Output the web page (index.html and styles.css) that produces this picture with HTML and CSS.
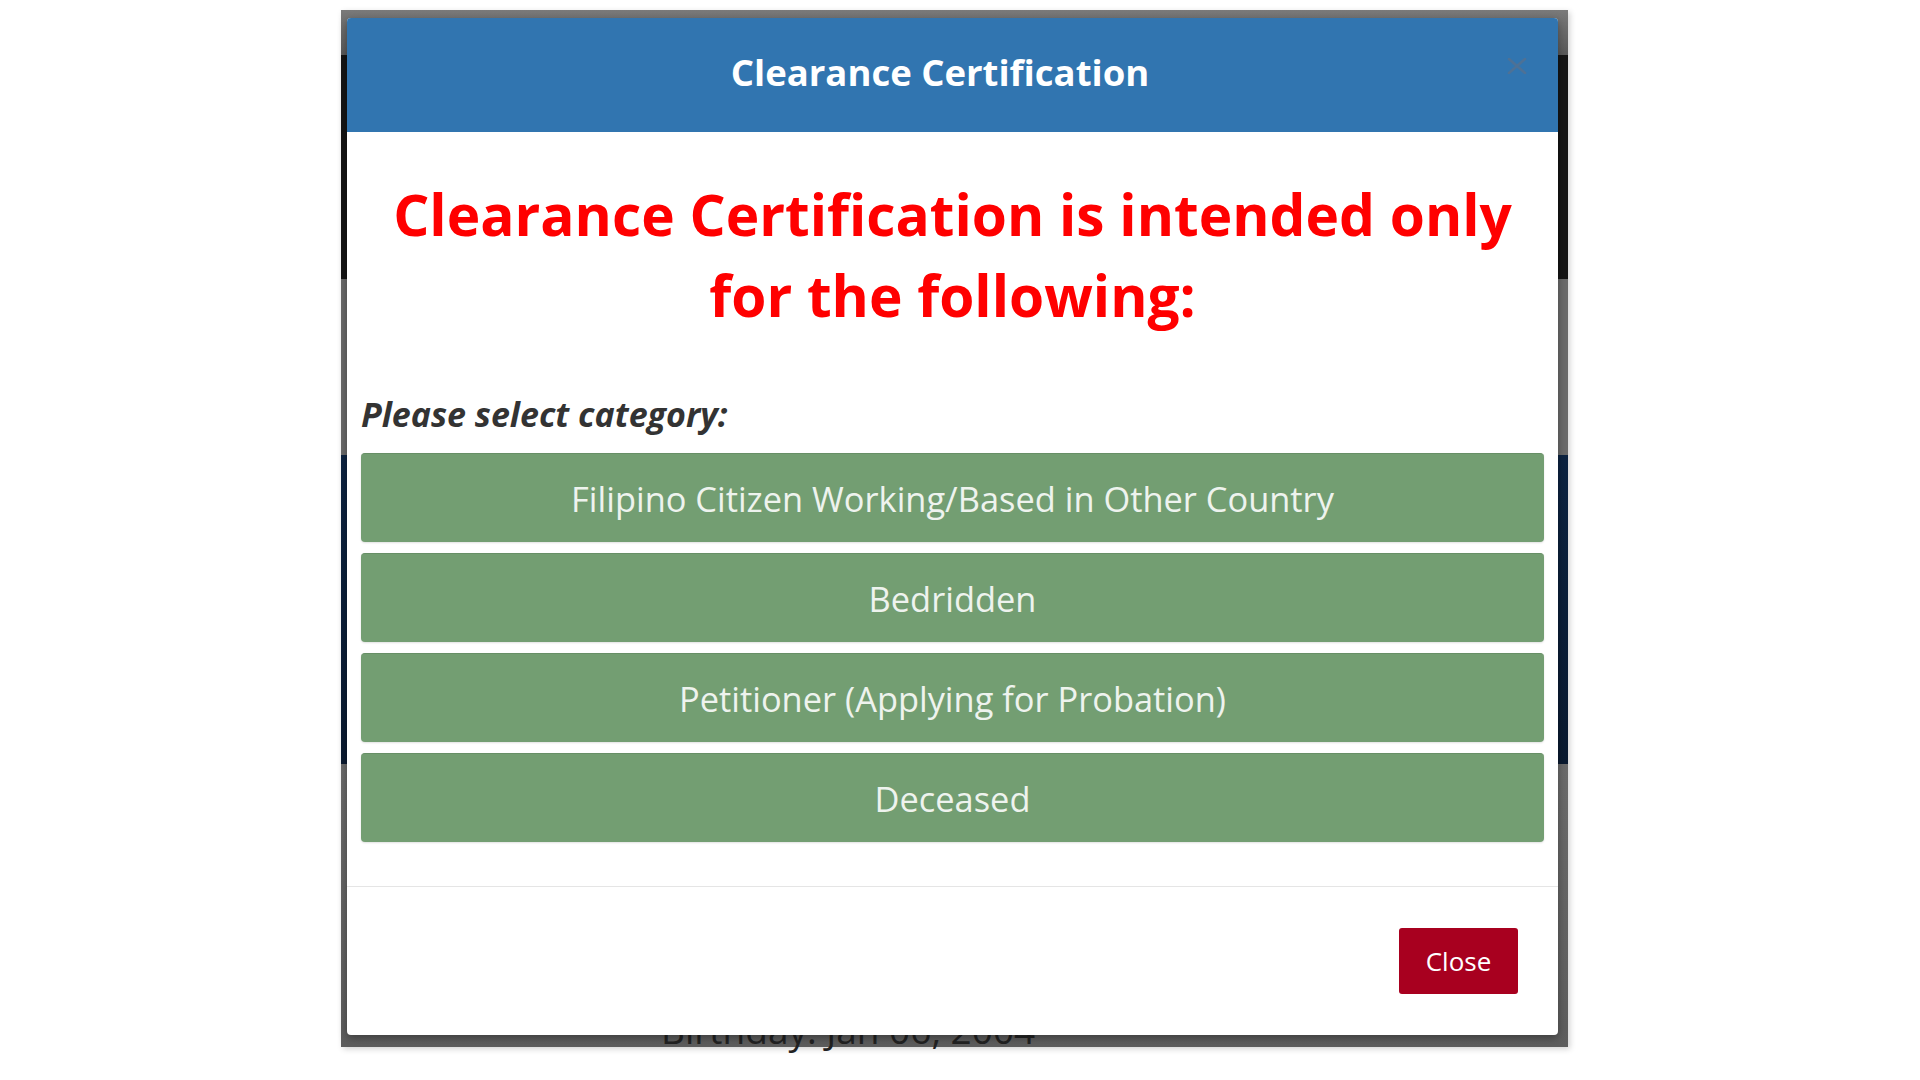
FILE: index.html
```html
<!DOCTYPE html>
<html lang="en">
<head>
<meta charset="utf-8">
<title>Clearance Certification</title>
<link rel="stylesheet" href="styles.css">
</head>
<body>
<div class="screen">
  <div class="modal">
    <div class="modal-header">
      <h4 class="modal-title">Clearance Certification</h4>
      <button class="close" type="button" aria-label="Close">
        <svg width="20" height="16" viewBox="0 0 20 16"><path d="M2 1 L18 15 M18 1 L2 15" stroke="currentColor" stroke-width="2.6" stroke-linecap="round" fill="none"/></svg>
      </button>
    </div>
    <div class="modal-body">
      <h1 class="notice">Clearance Certification is intended only for the following:</h1>
      <p class="label">Please select category:</p>
      <div class="options">
        <button class="opt" type="button">Filipino Citizen Working/Based in Other Country</button>
        <button class="opt" type="button">Bedridden</button>
        <button class="opt" type="button">Petitioner (Applying for Probation)</button>
        <button class="opt" type="button">Deceased</button>
      </div>
    </div>
    <div class="modal-footer">
      <button class="btn-close" type="button">Close</button>
    </div>
  </div>
  <div class="behind">Birthday: Jan 06, 2004</div>
</div>
</body>
</html>
```

FILE: styles.css
```css
html, body {
  margin: 0;
  padding: 0;
  background: #ffffff;
}

body {
  font-family: "Open Sans", "Noto Sans", sans-serif;
  width: 1920px;
  height: 1080px;
  overflow: hidden;
}

.screen {
  position: relative;
  box-sizing: border-box;
  margin: 10px 0 0 341px;
  width: 1227px;
  height: 1037px;
  padding: 8px 10px 0 6px;
  background: linear-gradient(to bottom,
    #7a7a7a 0, #595959 45px,
    #151515 45px, #151515 269px,
    #6a6a6a 269px, #6a6a6a 445px,
    #0c2341 445px, #0a1a30 754px,
    #6b6b6b 754px, #5d5d5d 100%);
  box-shadow: 2px 2px 6px rgba(0, 0, 0, 0.18);
}

.modal {
  position: relative;
  z-index: 2;
  background: #ffffff;
  border-radius: 4px;
  overflow: hidden;
  box-shadow: 0 3px 9px rgba(0, 0, 0, 0.35);
}

.modal-header {
  display: flex;
  align-items: center;
  box-sizing: border-box;
  height: 114px;
  padding: 0 25px 6px 26px;
  background: #3175b0;
}

.modal-title {
  flex: 1;
  margin: 0;
  text-align: center;
  color: #ffffff;
  font-size: 36.5px;
  font-weight: 700;
}

.close {
  align-self: flex-start;
  margin-top: 40px;
  width: 26px;
  padding: 0;
  border: 0;
  background: transparent;
  color: #4d7196;
  text-align: left;
  line-height: 0;
}

.modal-body {
  padding: 42px 14px 44px;
}

.notice {
  margin: 0;
  text-align: center;
  color: #ff0000;
  font-size: 56.8px;
  line-height: 81px;
  font-weight: 700;
}

.label {
  margin: 58px 0 0;
  color: #333333;
  font-size: 34px;
  line-height: 40px;
  font-weight: 700;
  font-style: italic;
}

.options {
  display: flex;
  flex-direction: column;
  gap: 11px;
  margin-top: 19px;
}

.opt {
  display: block;
  width: 100%;
  height: 89px;
  border: 0;
  border-top: 1px solid #678f66;
  border-radius: 4px;
  background: #739e72;
  color: #eef3ee;
  font-family: "Open Sans", "Noto Sans", sans-serif;
  font-size: 34.4px;
  box-shadow: 0 1px 2px rgba(0, 0, 0, 0.12);
}

.modal-footer {
  display: flex;
  justify-content: flex-end;
  border-top: 1px solid #e5e5e5;
  padding: 41px 40px;
}

.btn-close {
  width: 119px;
  height: 66px;
  border: 0;
  border-radius: 3px;
  background: #a8001f;
  color: #ffffff;
  font-family: "Open Sans", "Noto Sans", sans-serif;
  font-size: 26px;
}

.behind {
  position: absolute;
  z-index: 1;
  left: 320px;
  top: 1001px;
  color: #222222;
  font-size: 37px;
  line-height: 37px;
  white-space: nowrap;
}
```
